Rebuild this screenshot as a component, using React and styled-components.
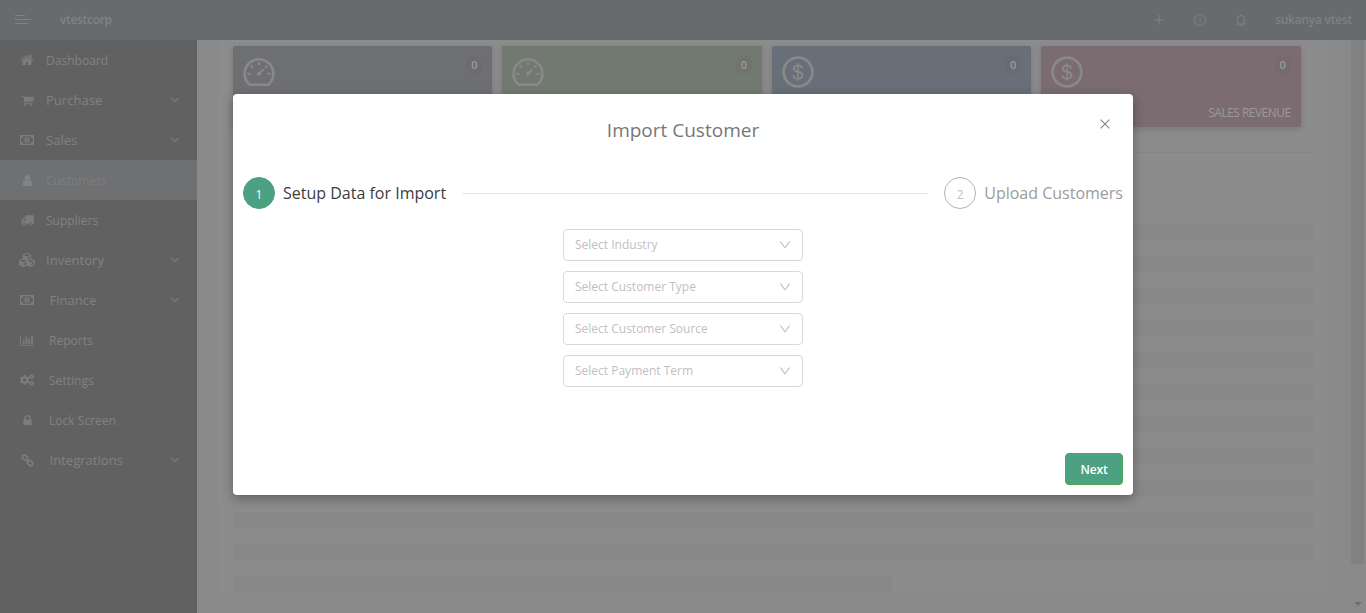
import React from 'react';
import styled, { createGlobalStyle } from 'styled-components';
import {
  AiOutlinePlus, AiOutlineClockCircle, AiOutlineBell, AiOutlineClose,
  AiOutlineDown, AiOutlineDashboard, AiOutlineDollarCircle,
} from 'react-icons/ai';
import { FaCubes, FaCogs, FaTruck } from 'react-icons/fa';

const GlobalStyle = createGlobalStyle`
  * { box-sizing: border-box; }
  body { margin: 0; overflow: hidden; font-family: "Open Sans", sans-serif; font-size: 12px; }
  svg { display: block; flex: none; }
`;

const Page = styled.div`
  position: relative;
  width: 1366px;
  height: 613px;
  overflow: hidden;
  display: flex;
  flex-direction: column;
  background: #8a8a8a;
`;

const Header = styled.header`
  height: 40px;
  flex: none;
  display: flex;
  align-items: center;
  padding: 0 14px 0 15px;
  background: #676b6e;
  color: #808284;
`;

const Brand = styled.div`
  margin-left: 29px;
  font-weight: 600;
  letter-spacing: -0.33px;
  line-height: 40px;
`;

const HeaderTools = styled.div`
  margin-left: auto;
  display: flex;
  align-items: center;
  color: #7e8182;
`;

const ToolIcon = styled.span`
  display: flex;
  justify-content: center;
  width: 14px;
  margin-right: ${(p) => p.$gap}px;
`;

const UserName = styled.span`
  font-weight: 600;
  letter-spacing: -0.25px;
  line-height: 40px;
`;

const Body = styled.div`
  display: flex;
  flex: 1;
  min-height: 0;
`;

const Sidebar = styled.nav`
  width: 197px;
  flex: none;
  background: #616161;
`;

const MenuItem = styled.div`
  display: flex;
  align-items: center;
  height: 40px;
  padding: 0 17px 0 18px;
  font-size: ${(p) => (p.$group ? 13 : 12)}px;
  line-height: 40px;
  color: ${(p) => (p.$active ? '#7d7e7f' : '#818181')};
  background: ${(p) => (p.$active ? '#6e7072' : 'transparent')};
`;

const MenuIcon = styled.span`
  display: flex;
  justify-content: center;
  width: 18px;
  margin-right: ${(p) => p.$gap}px;
  color: ${(p) => (p.$active ? '#828384' : '#7c7c7c')};
`;

const MenuLabel = styled.span`
  flex: 1;
  padding-top: ${(p) => (p.$group ? 0 : 1)}px;
  letter-spacing: 0.03px;
`;

const Content = styled.main`
  width: 1154px;
  flex: none;
  padding: 0 22px 21px 21px;
`;

const Panel = styled.section`
  height: 552px;
  padding: 6px 15px 0;
  background: #8c8c8c;
`;

const Cards = styled.div`
  display: grid;
  grid-template-columns: repeat(4, 259.4px);
  column-gap: 10px;
`;

const Card = styled.div`
  display: flex;
  flex-direction: column;
  justify-content: space-between;
  height: 81px;
  padding: 10px;
  border-radius: 2px;
  color: #8f8f90;
  background: ${(p) => p.$color};
  box-shadow: 0 2px 6px rgba(0, 0, 0, 0.15);
`;

const CardTop = styled.div`
  display: flex;
  justify-content: space-between;
  color: #898989;
`;

const CardIcon = styled.span`
  margin: -2px 0 0 -2px;
`;

const Count = styled.span`
  width: 16px;
  height: 18px;
  border-radius: 8px;
  text-align: center;
  font-size: 11px;
  font-weight: 600;
  line-height: 18px;
  color: #9b9b9b;
  background: rgba(100, 100, 100, 0.2);
`;

const CardLabel = styled.span`
  align-self: flex-end;
  font-size: 12px;
  line-height: 14px;
  letter-spacing: -0.53px;
  margin-bottom: -3px;
  color: #9d989a;
`;

const Divider = styled.div`
  height: 1px;
  margin: 25px 0 71px;
  background: #868686;
`;

const Stripes = styled.div`
  display: grid;
  row-gap: 16px;
`;

const Stripe = styled.div`
  height: 16px;
  width: ${(p) => (p.$short ? '659px' : '1081px')};
  background: #888;
`;

const ScrollBar = styled.div`
  width: 13px;
  display: flex;
  flex-direction: column;
  justify-content: space-between;
  align-items: center;
  padding-bottom: 7px;
`;

const ScrollThumb = styled.div`
  width: 13px;
  height: 524px;
  background: #818181;
`;

const ScrollArrow = styled.div`
  border: 4px solid transparent;
  border-top-color: #6d6d6d;
  border-bottom: 0;
`;

const Modal = styled.div`
  position: absolute;
  left: 233px;
  top: 94px;
  width: 900px;
  height: 401px;
  display: flex;
  flex-direction: column;
  padding: 10px;
  border-radius: 4px;
  background: #fff;
  box-shadow: 0 4px 12px rgba(0, 0, 0, 0.3);
`;

const ModalHead = styled.div`
  display: grid;
  grid-template-columns: 1fr auto 1fr;
  align-items: center;
  height: 52px;
  padding-right: 11px;
`;

const Title = styled.h1`
  grid-column: 2;
  margin: 0 0 0 11px;
  font-size: 19px;
  font-weight: 400;
  line-height: 28px;
  color: #777;
`;

const Close = styled.span`
  justify-self: end;
  margin-top: -12px;
  color: #858585;
`;

const Steps = styled.div`
  display: flex;
  align-items: center;
  height: 32px;
  margin-top: 21px;
  font-size: 16px;
`;

const StepDot = styled.span`
  width: 32px;
  height: 32px;
  margin-right: 8px;
  border: 1px solid ${(p) => (p.$active ? '#4ca183' : '#b4b4b4')};
  border-radius: 50%;
  background: ${(p) => (p.$active ? '#4ca183' : '#fff')};
  color: ${(p) => (p.$active ? '#fff' : '#bfbfbf')};
  font-size: 12px;
  line-height: 33px;
  text-align: center;
`;

const StepTitle = styled.span`
  line-height: 32px;
  color: ${(p) => (p.$active ? '#3c3c3c' : '#9c9c9c')};
`;

const StepLine = styled.span`
  flex: 1;
  height: 1px;
  margin: 0 16px;
  background: #e8e8e8;
`;

const Fields = styled.div`
  display: grid;
  row-gap: 10px;
  width: 240px;
  margin: 20px auto 0;
`;

const Select = styled.div`
  display: flex;
  justify-content: space-between;
  align-items: center;
  height: 32px;
  padding: 0 10px 0 11px;
  border: 1px solid #d9d9d9;
  border-radius: 4px;
  color: #bfbfbf;
  line-height: 30px;
`;

const NextButton = styled.button`
  align-self: flex-end;
  width: 58px;
  height: 32px;
  margin-top: auto;
  padding: 0;
  border: 1px solid #4ba64f;
  border-radius: 4px;
  background: #4ca183;
  color: #fff;
  font: 600 12px "Open Sans", sans-serif;
  letter-spacing: -0.2px;
`;

const Glyph = ({ d, w = 1792, size = 13 }) => (
  <svg width={(size * w) / 1792} height={size} viewBox={`0 0 ${w} 1792`} fill="currentColor"><path d={d} /></svg>
);

const Home = () => <Glyph size={14} d="M1472 992v480q0 26-19 45t-45 19h-384v-384h-256v384h-384q-26 0-45-19t-19-45v-480q0-1 .5-3t.5-3l575-474 575 474q1 2 1 6zm223-69l-62 74q-8 9-21 11h-3q-13 0-21-7l-692-577-692 577q-12 8-24 7-13-2-21-11l-62-74q-8-10-7-23.5t11-21.5l719-599q32-26 76-26t76 26l244 204v-195q0-14 9-23t23-9h192q14 0 23 9t9 23v408l219 182q10 8 11 21.5t-7 23.500z" />;
const Cart = () => <Glyph size={13} d="M704 1536q0 52-38 90t-90 38-90-38-38-90 38-90 90-38 90 38 38 90zm896 0q0 52-38 90t-90 38-90-38-38-90 38-90 90-38 90 38 38 90zm128-1088v512q0 24-16.5 42.5t-40.5 21.5l-1044 122q13 60 13 70 0 16-24 64h920q26 0 45 19t19 45-19 45-45 19h-1024q-26 0-45-19t-19-45q0-11 8-31.5t16-36 21.5-40 15.5-29.5l-177-823h-204q-26 0-45-19t-19-45 19-45 45-19h256q16 0 28.5 6.5t19.5 15.5 13 24.5 8 26 5.5 29.5 4.5 26h1201q26 0 45 19t19 45z" />;
const Person = () => <Glyph size={13} d="M1536 1399q0 109-62.5 187t-150.5 78h-854q-88 0-150.5-78t-62.5-187q0-85 8.5-160.5t31.5-152 58.5-131 94-89 134.5-34.5q131 128 313 128t313-128q76 0 134.5 34.5t94 89 58.5 131 31.5 152 8.5 160.5zm-256-887q0 159-112.5 271.500t-271.500 112.500-271.500-112.500-112.500-271.500 112.500-271.500 271.500-112.500 271.500 112.500 112.500 271.500z" />;
const Lock = () => <Glyph size={13} d="M640 768h512v-192q0-106-75-181t-181-75-181 75-75 181v192zm832 96v576q0 40-28 68t-68 28h-960q-40 0-68-28t-28-68v-576q0-40 28-68t68-28h32v-192q0-184 132-316t316-132 316 132 132 316v192h32q40 0 68 28t28 68z" />;
const Bars = () => <Glyph w={2048} size={13} d="M640 896v512h-256v-512h256zm384-512v1024h-256v-1024h256zm1024 1152v128h-2048v-1536h128v1408h1920zm-640-896v768h-256v-768h256zm384-384v1152h-256v-1152h256z" />;
const Money = () => (
  <svg width="14" height="10" viewBox="0 0 14 10" fill="none" stroke="currentColor">
    <path d="M.6.6h12.800v8.800H.6z" strokeWidth="1.200" />
    <path fill="currentColor" stroke="none" d="M1 1h2.400A2.400 2.400 0 0 1 1 3.200zM13 1h-2.400A2.400 2.400 0 0 0 13 3.200zM1 9h2.400A2.400 2.400 0 0 0 1 6.800zM13 9h-2.400A2.400 2.400 0 0 1 13 6.800z" />
    <ellipse cx="7" cy="5" rx="2.500" ry="3" fill="currentColor" stroke="none" />
    <path d="M6.200 3.900l.9-.6v3.200M6 6.700h2.100" stroke="#616161" strokeWidth=".8" />
  </svg>
);
const Chain = () => (
  <svg width="13" height="13" viewBox="0 0 13 13" fill="none" stroke="currentColor" strokeWidth="1.800">
    <rect x="1.100" y="1.600" width="5.800" height="4" rx="2" transform="rotate(45 4 3.600)" />
    <rect x="6.100" y="7" width="5.800" height="4" rx="2" transform="rotate(45 9 9)" />
    <path d="M5 5l3 3" strokeWidth="1.400" />
  </svg>
);
const Truck = () => <FaTruck size={13} transform="scale(-1 1)" />;
const Chevron = () => (
  <svg width="10" height="6" viewBox="0 0 10 6" fill="none" stroke="#777" strokeWidth="1.700"><path d="M1.200 1L5 4.600 8.800 1" /></svg>
);
const Hamburger = () => (
  <svg width="16" height="10" viewBox="0 0 16 10" fill="currentColor"><path d="M0 0h10v1H0zM0 4h16v1H0zM0 8h13v1H0z" /></svg>
);

const menu = [
  { label: 'Dashboard', icon: <Home />, gap: 10 },
  { label: 'Purchase', icon: <Cart />, gap: 10, open: true },
  { label: 'Sales', icon: <Money />, gap: 10, open: true },
  { label: 'Customers', icon: <Person />, gap: 10, active: true },
  { label: 'Suppliers', icon: <Truck />, gap: 10 },
  { label: 'Inventory', icon: <FaCubes size={16} />, gap: 10, open: true },
  { label: 'Finance', icon: <Money />, gap: 13.5, open: true },
  { label: 'Reports', icon: <Bars />, gap: 13 },
  { label: 'Settings', icon: <FaCogs size={14} />, gap: 13 },
  { label: 'Lock Screen', icon: <Lock />, gap: 13 },
  { label: 'Integrations', icon: <Chain />, gap: 13.5, open: true },
];

const cards = [
  { color: '#6e6f73', icon: <AiOutlineDashboard size={36} /> },
  { color: '#727970', icon: <AiOutlineDashboard size={36} /> },
  { color: '#686f79', icon: <AiOutlineDollarCircle size={36} /> },
  { color: '#7a6c70', icon: <AiOutlineDollarCircle size={36} />, label: 'SALES REVENUE' },
];

const fields = ['Select Industry', 'Select Customer Type', 'Select Customer Source', 'Select Payment Term'];

export default function App() {
  return (
    <Page>
      <GlobalStyle />
      <Header>
        <Hamburger />
        <Brand>vtestcorp</Brand>
        <HeaderTools>
          <ToolIcon $gap={27}><AiOutlinePlus size={14} /></ToolIcon>
          <ToolIcon $gap={27}><AiOutlineClockCircle size={14} /></ToolIcon>
          <ToolIcon $gap={27}><AiOutlineBell size={14} /></ToolIcon>
          <UserName>sukanya vtest</UserName>
        </HeaderTools>
      </Header>
      <Body>
        <Sidebar>
          {menu.map((m) => (
            <MenuItem key={m.label} $active={m.active} $group={m.open}>
              <MenuIcon $gap={m.gap} $active={m.active}>{m.icon}</MenuIcon>
              <MenuLabel $group={m.open}>{m.label}</MenuLabel>
              {m.open && <Chevron />}
            </MenuItem>
          ))}
        </Sidebar>
        <Content>
          <Panel>
            <Cards>
              {cards.map((c) => (
                <Card key={c.color} $color={c.color}>
                  <CardTop><CardIcon>{c.icon}</CardIcon><Count>0</Count></CardTop>
                  {c.label && <CardLabel>{c.label}</CardLabel>}
                </Card>
              ))}
            </Cards>
            <Divider />
            <Stripes>
              {Array.from({ length: 12 }, (_, i) => <Stripe key={i} $short={i === 11} />)}
            </Stripes>
          </Panel>
        </Content>
        <ScrollBar><ScrollThumb /><ScrollArrow /></ScrollBar>
      </Body>
      <Modal>
        <ModalHead>
          <Title>Import Customer</Title>
          <Close><AiOutlineClose size={14} /></Close>
        </ModalHead>
        <Steps>
          <StepDot $active>1</StepDot>
          <StepTitle $active>Setup Data for Import</StepTitle>
          <StepLine />
          <StepDot>2</StepDot>
          <StepTitle>Upload Customers</StepTitle>
        </Steps>
        <Fields>
          {fields.map((f) => <Select key={f}><span>{f}</span><AiOutlineDown size={14} /></Select>)}
        </Fields>
        <NextButton>Next</NextButton>
      </Modal>
    </Page>
  );
}
